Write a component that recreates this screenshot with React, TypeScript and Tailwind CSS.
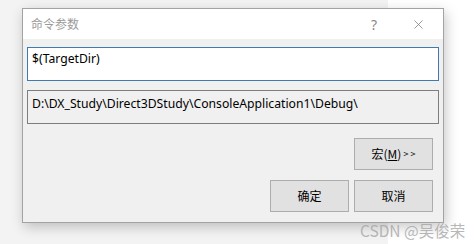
import { X } from "lucide-react";

const ui = { fontFamily: '"Segoe UI", "Noto Sans", "Noto Sans CJK SC", sans-serif' };
const cjk = { fontFamily: '"Noto Sans CJK SC", "Noto Sans", sans-serif' };

const Button = ({ children }: { children: React.ReactNode }) => (
  <button
    className="flex h-[32px] w-[79px] items-center justify-center border border-[#adadad] bg-[#e1e1e1] text-[12px] text-black"
    style={cjk}
  >
    {children}
  </button>
);

export default function App() {
  return (
    <div className="relative h-[244px] w-[475px] overflow-hidden bg-white">
      {/* window behind the dialog */}
      <div className="h-full w-[388px] bg-[#f3f3f3]" />

      <div className="absolute left-[22px] top-[8px] flex h-[215px] w-[422px] flex-col border border-[#a3a3a3] bg-[#f0f0f0] shadow-[2px_4px_12px_rgba(0,0,0,0.22)]">
        <div className="flex h-[30px] items-center bg-white pl-[8px] pr-[17px]">
          <span className="text-[12px] text-[#9a9a9a]" style={cjk}>
            命令参数
          </span>
          <span className="ml-auto mr-[34px] text-[14px] text-[#8a8a8a]" style={ui}>
            ?
          </span>
          <X className="h-[15px] w-[15px] text-[#7a7a7a]" strokeWidth={1.2} />
        </div>

        <div className="flex flex-1 flex-col px-[4px] pt-[8px]" style={ui}>
          <div className="h-[34px] border border-[#3f7bb0] bg-white px-[4px] pt-[2px] text-[12.2px] leading-[18px] text-black">
            $(TargetDir)
          </div>
          <div className="mt-[9px] h-[34px] border border-[#7e7e7e] bg-[#f0f0f0] px-[4px] pt-[4px] text-[12.2px] leading-[18px] text-black">
            D:\DX_Study\Direct3DStudy\ConsoleApplication1\Debug\
          </div>

          <div className="mt-[14px] flex justify-end pr-[6px]">
            <Button>
              宏(<span className="underline">M</span>)<span className="ml-[2px] text-[9px]">&gt; &gt;</span>
            </Button>
          </div>
          <div className="mt-[10px] flex justify-end gap-[5px] pr-[6px]">
            <Button>确定</Button>
            <Button>取消</Button>
          </div>
        </div>
      </div>

      <div
        className="absolute left-[360px] top-[219px] text-[15.5px] text-[#a5a5a5]/80"
        style={cjk}
      >
        CSDN @吴俊荣
      </div>
    </div>
  );
}
